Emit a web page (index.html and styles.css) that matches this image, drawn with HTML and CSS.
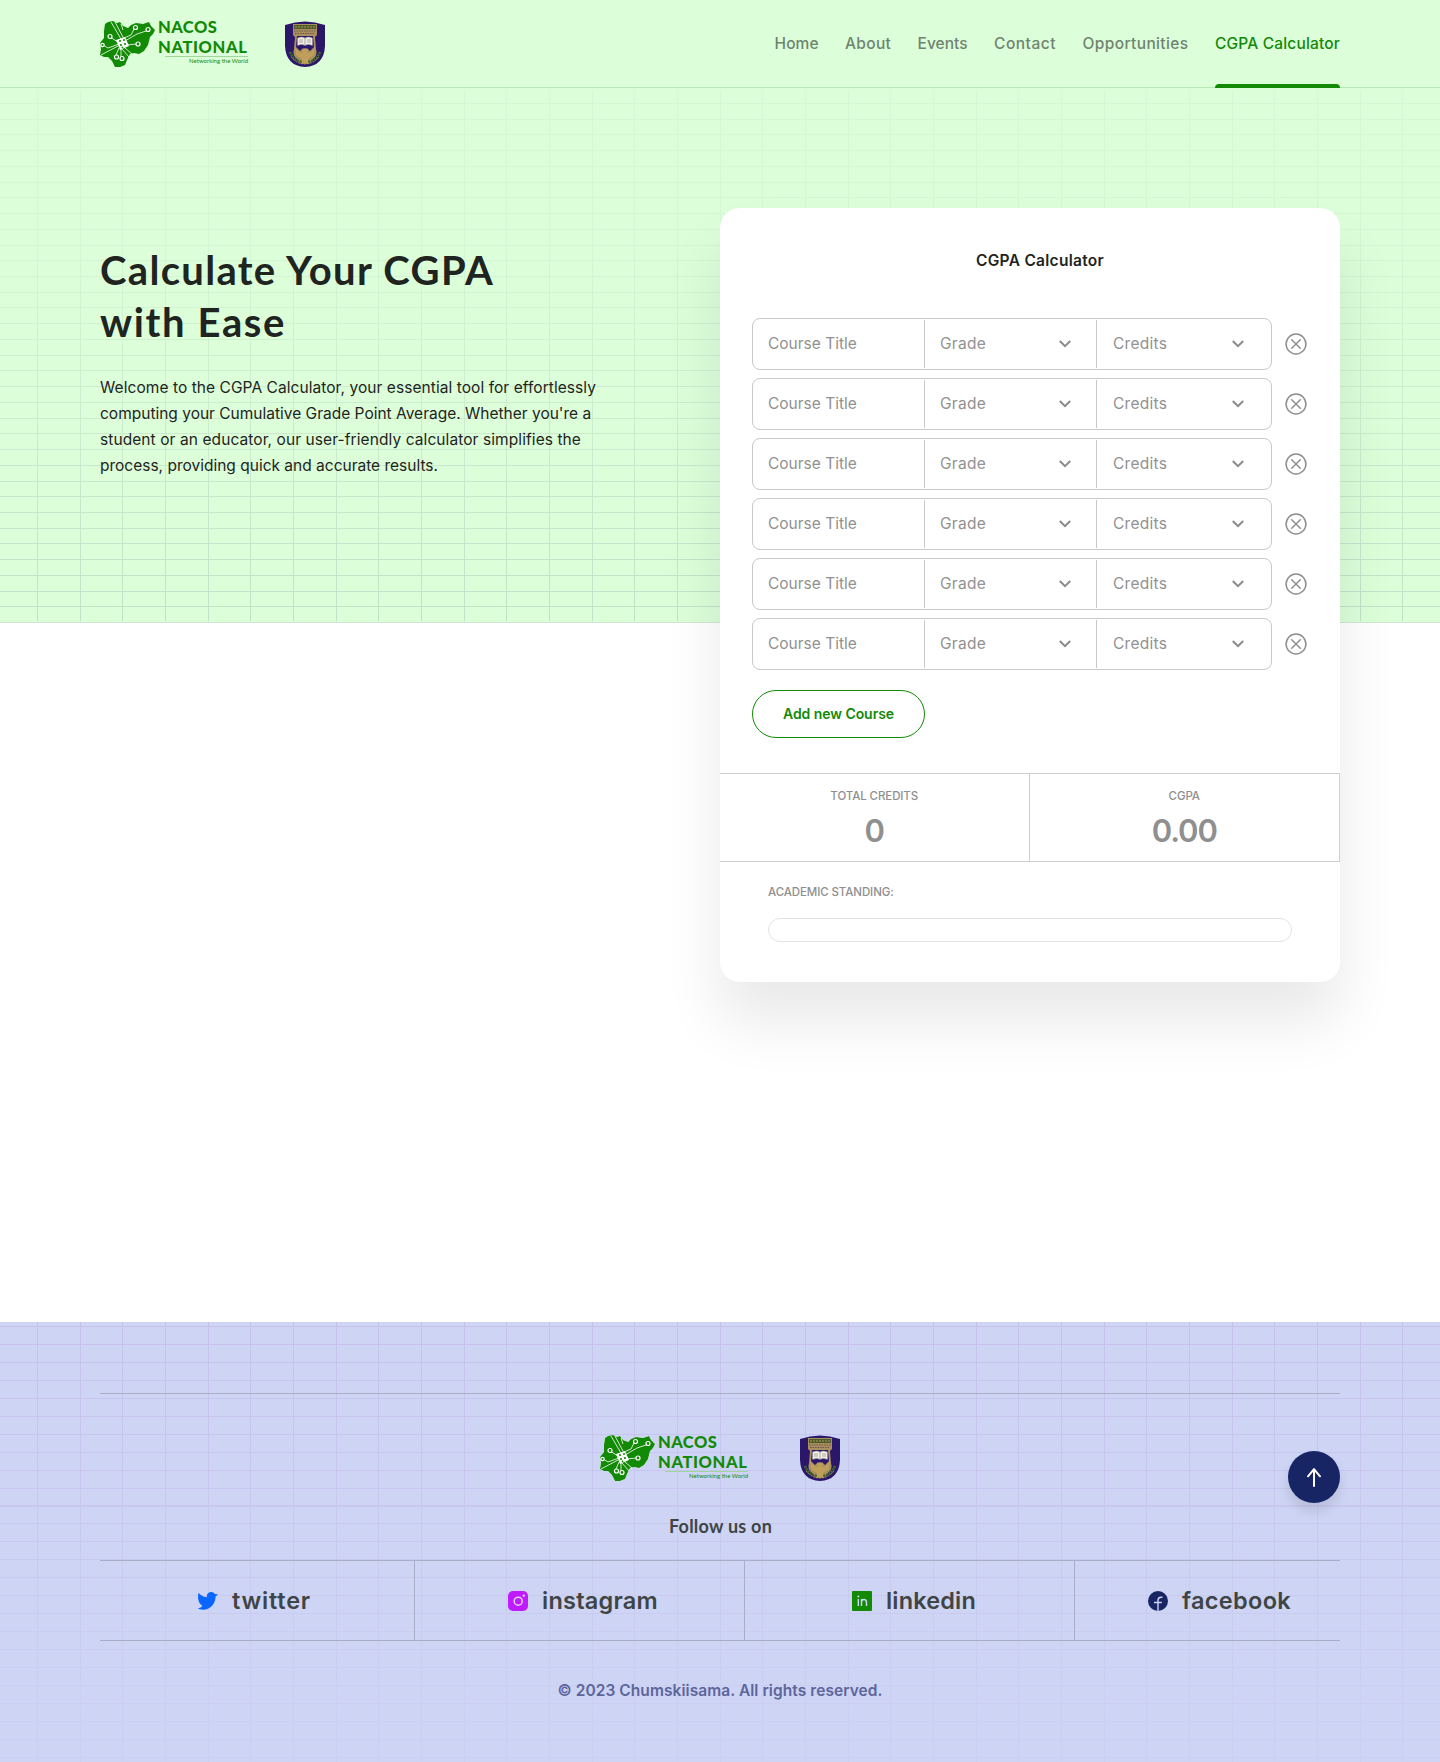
FILE: index.html
```html
<!DOCTYPE html>
<html lang="en">
<head>
<meta charset="utf-8">
<title>CGPA Calculator</title>
<link rel="stylesheet" href="styles.css">
</head>
<body>
<svg class="defs" aria-hidden="true">
  <symbol id="map" viewBox="0 0 55 47">
    <path fill="#128a06" d="M5 3 8 1 13 0 17 2 20 1 23 5 28 7 31 4 36 2 43 3 49 1 51 5 55 9 53 13 50 16 48 24 44 30 39 33 34 32 30 33 27 39 25 44 20 46 15 46 12 40 8 36 4 36 0 34 1 28 0 22 4 17 4 10Z"/>
    <g fill="none" stroke="#fff" stroke-width=".8">
      <path d="M11 1 21 18M15 1 24 18M21 3 23 9M24 17 31 14 34 8M25 20 37 13 46 10M18 21 10 16M19 23 8 27 3 24M18 25 1 34M26 24 37 23M25 27 32 33M22 28 29 36M21 28 21 36M19 27 16 34"/>
      <g fill="#128a06" stroke-width="1.200"><circle cx="35.500" cy="6.500" r="2"/><circle cx="48" cy="8.500" r="2"/><circle cx="10" cy="15.500" r="2"/><circle cx="38" cy="23" r="2"/><circle cx="16.500" cy="36" r="2"/><circle cx="22" cy="37.500" r="2"/><circle cx="2.500" cy="24" r="1.700"/></g>
    </g>
    <path fill="#fff" d="m16 19 9-3 4 9-9 4Z"/>
    <g fill="#128a06"><circle cx="20" cy="20" r="1.100"/><circle cx="24" cy="19" r="1"/><circle cx="21" cy="24" r="1.100"/><circle cx="25" cy="23" r="1.100"/><circle cx="22.500" cy="26.500" r=".9"/></g>
  </symbol>
  <symbol id="shield" viewBox="0 0 40 46">
    <path fill="#2b1769" d="M0 4Q20-3 40 4V25Q39 45 20 46 1 45 0 25Z"/>
    <path fill="#a88f5c" d="M8 3H32V14L30 16 31 28Q33 34 28 38L24 43H16L12 38Q7 34 9 28L10 16 8 14Z"/>
    <path fill="#4b5a2b" d="M9 4H31V8H9Z"/>
    <path stroke="#b79a57" stroke-width="1" stroke-dasharray="2 1" d="M10 6H30"/>
    <path stroke="#5b4653" stroke-width=".8" d="M9 10H31M10 12.500H30" stroke-dasharray="1.500 1"/>
    <path fill="#2b1769" d="M12 15 28 15 29 26 25 30 22 27 20 29 18 27 15 30 11 26Z"/>
    <path fill="#f3efe6" stroke="#8d8a9d" stroke-width=".5" d="M12.500 17Q17 15 20 17 23 15 27.500 17V24.500Q23 22.500 20 24.500 17 22.500 12.500 24.500Z"/>
    <path stroke="#777" stroke-width=".6" d="M20 17V24M14 19H18M14 21H18M22 19H26M22 21H26"/>
    <path fill="#c09f5b" d="M10 24Q12 32 18 32L17 29 20 27 23 29 22 32Q28 32 30 24L29 34 23 38 25 42H15L17 38 11 34Z"/>
    <path fill="none" stroke="#3f6b2b" stroke-width="2.500" stroke-dasharray="2 .8" d="M5 31Q8 39 17 41M35 31Q32 39 23 41"/>
    <path fill="none" stroke="#b79a57" stroke-width=".9" stroke-dasharray="2 1" d="M6 36Q12 43 20 43 28 43 34 36"/>
  </symbol>
  <symbol id="chev" viewBox="0 0 12 8"><path fill="none" stroke="#8a8a8a" stroke-width="2" d="m.8 1 5.200 5.200L11.200 1"/></symbol>
  <symbol id="close" viewBox="0 0 22 22"><g fill="none" stroke="#8f8f8f" stroke-width="1.500"><circle cx="11" cy="11" r="9.900"/><path stroke-linecap="round" d="m6.700 6.700 8.600 8.600M15.300 6.700l-8.600 8.600"/></g></symbol>
</svg>

<header class="header">
  <div class="brand">
    <svg class="map"><use href="#map"/></svg>
    <div class="wordmark"><b class="w1">NACOS</b><b class="w2">NATIONAL</b><small>Networking the World</small></div>
    <svg class="shield"><use href="#shield"/></svg>
  </div>
  <nav class="nav">
    <a class="n1">Home</a><a class="n2">About</a><a class="n3">Events</a><a class="n4">Contact</a><a class="n5">Opportunities</a><a class="n6 active">CGPA Calculator</a>
  </nav>
</header>

<main class="main">
  <section class="hero">
    <div class="intro">
      <h1><span class="h1a">Calculate Your CGPA</span><br><span class="h1b">with Ease</span></h1>
      <p><span class="p1">Welcome to the CGPA Calculator, your essential tool for effortlessly</span><br><span class="p2">computing your Cumulative Grade Point Average. Whether you're a</span><br><span class="p3">student or an educator, our user-friendly calculator simplifies the</span><br><span class="p4">process, providing quick and accurate results.</span></p>
    </div>
    <div class="card">
      <h2><span>CGPA Calculator</span></h2>
      <div class="rows">
        <div class="row"><div class="fields"><div class="f"><span class="ct">Course Title</span></div><div class="f"><span class="gr">Grade</span><svg class="chev"><use href="#chev"/></svg></div><div class="f"><span class="cr">Credits</span><svg class="chev"><use href="#chev"/></svg></div></div><svg class="close"><use href="#close"/></svg></div>
        <div class="row"><div class="fields"><div class="f"><span class="ct">Course Title</span></div><div class="f"><span class="gr">Grade</span><svg class="chev"><use href="#chev"/></svg></div><div class="f"><span class="cr">Credits</span><svg class="chev"><use href="#chev"/></svg></div></div><svg class="close"><use href="#close"/></svg></div>
        <div class="row"><div class="fields"><div class="f"><span class="ct">Course Title</span></div><div class="f"><span class="gr">Grade</span><svg class="chev"><use href="#chev"/></svg></div><div class="f"><span class="cr">Credits</span><svg class="chev"><use href="#chev"/></svg></div></div><svg class="close"><use href="#close"/></svg></div>
        <div class="row"><div class="fields"><div class="f"><span class="ct">Course Title</span></div><div class="f"><span class="gr">Grade</span><svg class="chev"><use href="#chev"/></svg></div><div class="f"><span class="cr">Credits</span><svg class="chev"><use href="#chev"/></svg></div></div><svg class="close"><use href="#close"/></svg></div>
        <div class="row"><div class="fields"><div class="f"><span class="ct">Course Title</span></div><div class="f"><span class="gr">Grade</span><svg class="chev"><use href="#chev"/></svg></div><div class="f"><span class="cr">Credits</span><svg class="chev"><use href="#chev"/></svg></div></div><svg class="close"><use href="#close"/></svg></div>
        <div class="row"><div class="fields"><div class="f"><span class="ct">Course Title</span></div><div class="f"><span class="gr">Grade</span><svg class="chev"><use href="#chev"/></svg></div><div class="f"><span class="cr">Credits</span><svg class="chev"><use href="#chev"/></svg></div></div><svg class="close"><use href="#close"/></svg></div>
      </div>
      <button class="add"><span>Add new Course</span></button>
      <div class="stats">
        <div class="stat"><span class="label tc">TOTAL CREDITS</span><span class="value v1">0</span></div>
        <div class="stat"><span class="label cg">CGPA</span><span class="value v2">0.00</span></div>
      </div>
      <div class="standing"><span class="label as">ACADEMIC STANDING:</span><div class="bar"></div></div>
    </div>
  </section>
</main>

<footer class="footer">
  <div class="foot-in">
    <div class="brand">
      <svg class="map outlined"><use href="#map"/></svg>
      <div class="wordmark"><b class="w1">NACOS</b><b class="w2">NATIONAL</b><small>Networking the World</small></div>
      <svg class="shield"><use href="#shield"/></svg>
    </div>
    <p class="follow"><span>Follow us on</span></p>
    <div class="social">
      <a><svg viewBox="1 0 20.500 20"><path fill="#0a66ff" d="M21.500 3.300 19 5.400C18.900 13 13.300 19 6.500 19 3.500 19 1.500 18.400 1 17.300 3 17 4.600 16.200 5.500 15 .8 11.800.5 6.500 1.500 1.500 3.500 4 6.500 6 10 6.100V5.200C10 2.700 12 .8 14.500.8 16 .8 17.400 1.600 18.300 2.800Z"/></svg><span class="s1">twitter</span></a>
      <a><svg viewBox="0 0 20 20"><rect width="20" height="20" rx="5" fill="#c01aff"/><circle cx="10.200" cy="10.200" r="4" fill="none" stroke="#dfd4f6" stroke-width="1.500"/><circle cx="15.800" cy="4.600" r="1.200" fill="#dfd4f6"/></svg><span class="s2">instagram</span></a>
      <a><svg viewBox="0 0 20 20"><rect width="20" height="20" rx="1" fill="#128a06"/><path fill="none" stroke="#cdd4f4" stroke-width="1.400" d="M6.300 8V15M9.500 15V8M9.500 11.500Q9.700 8.500 12 8.500 14.500 8.500 14.500 11.500V15"/><circle cx="6.300" cy="5.500" r="1" fill="#cdd4f4"/></svg><span class="s3">linkedin</span></a>
      <a><svg viewBox="0 0 20 20"><circle cx="10" cy="10" r="10" fill="#182565"/><path fill="none" stroke="#cdd4f4" stroke-width="1.400" d="M10 20V9.500Q10 6.300 13 6.300H14.500M6 11.500H13.800"/></svg><span class="s4">facebook</span></a>
    </div>
    <p class="copy"><span>© 2023 Chumskiisama. All rights reserved.</span></p>
  </div>
  <a class="top"><svg viewBox="0 0 14 19"><path fill="none" stroke="#fff" stroke-width="2" stroke-linecap="round" stroke-linejoin="round" d="M7 18V1.200M1 8.300 7 1.200l6 7.100"/></svg></a>
</footer>
</body>
</html>
```
FILE: styles.css
```css
* { box-sizing: border-box; }
body { margin: 0; background: #fff; color: #1f2421; font-family: Inter, sans-serif; font-size: 15.5px; }
h1, h2, p { margin: 0; }
.defs { position: absolute; width: 0; height: 0; }

/* Header */
.header { height: 88px; padding: 0 100px; display: flex; justify-content: space-between; background: #dcfed9; border-bottom: 1px solid #b8e8b5; }
.brand { display: flex; align-items: flex-start; padding-top: 20px; }
.map { width: 55px; height: 47px; margin-top: 1px; }
.outlined { overflow: visible; filter: drop-shadow(0 0 .6px #fff) drop-shadow(0 0 .6px #fff); margin-top: 0; }
.wordmark { display: flex; flex-direction: column; width: 90px; height: 46px; margin-left: 3px; color: #128a06; font-family: Lato, sans-serif; white-space: nowrap; }
.wordmark b { font-weight: 900; font-size: 16.5px; line-height: 18.5px; margin-top: -2px; }
.wordmark .w1 { letter-spacing: .45px; }
.wordmark .w2 { letter-spacing: .62px; margin-top: 1px; }
.wordmark small { width: 83px; align-self: flex-end; text-align: right; font-size: 6px; line-height: 8px; border-top: 1px solid #9fd79b; }
.shield { width: 40px; height: 46px; margin: 1px 0 0 37px; }
.nav { display: flex; gap: 26.5px; line-height: 87px; font-weight: 500; color: #6f8470; }
.nav a { white-space: nowrap; height: 88px; }
.n1 { letter-spacing: .055px; }
.n2 { letter-spacing: .29px; }
.n3 { letter-spacing: .018px; }
.n4 { letter-spacing: .5px; }
.n5 { letter-spacing: .374px; }
.n6 { letter-spacing: .175px; }
.nav .active { position: relative; color: #128a06; }
.active::after { content: ""; position: absolute; left: 0; right: 0; bottom: 0; height: 4px; border-radius: 4px 4px 0 0; background: #128a06; }

/* Hero */
.main { height: 1234px; }
.hero { position: relative; height: 535px; padding: 120px 100px 0; display: flex; justify-content: space-between; align-items: flex-start; background: #dcfed9; border-bottom: 1px solid #cfe6d2; }
.hero::before, .footer::before { content: ""; position: absolute; inset: 2px 0 1px; }
.hero::before {
  background: repeating-linear-gradient(to right, transparent 0 37px, #a9ccb8 37px 38px, transparent 38px 42.667px), repeating-linear-gradient(transparent 0 13px, #a9ccb8 13px 14px, transparent 14px 15.73px);
  -webkit-mask: linear-gradient(rgba(0,0,0,.13), rgba(0,0,0,.16) 30%, rgba(0,0,0,.55));
}
.intro { position: relative; padding-top: 36px; white-space: nowrap; }
h1 { font: 700 40px/52px Lato, sans-serif; }
.h1a { letter-spacing: 1.33px; }
.h1b { letter-spacing: 1.6px; }
.intro p { margin-top: 27px; line-height: 26px; }
.p1 { letter-spacing: .063px; }
.p3 { letter-spacing: .085px; }

/* Calculator card */
.card { position: relative; width: 620px; height: 774px; background: #fff; border-radius: 20px; box-shadow: 0 40px 60px rgba(0,0,0,.09); }
h2 { font-size: 15.5px; font-weight: 600; line-height: 24px; letter-spacing: .28px; padding: 41px 0 0 20px; text-align: center; }
.rows { margin: 45px 0 0 32px; display: grid; gap: 8px; }
.row { display: flex; align-items: center; gap: 13px; }
.fields { width: 520px; height: 52px; padding: 1px 0; border: 1px solid #c9c9c9; border-radius: 8px; display: grid; grid-template-columns: 172px 172px 1fr; color: #919191; }
.f { display: flex; align-items: center; justify-content: space-between; padding: 0 25px 0 15px; border-right: 1px solid #c9c9c9; }
.f:last-child { border: 0; padding-left: 16px; padding-right: 27px; }
.f span { margin-top: -1px; }
.gr, .cr { letter-spacing: .26px; }
.chev { width: 12px; height: 8px; }
.close { width: 22px; height: 22px; }
.add { display: block; margin: 20px 0 0 32px; width: 173px; height: 48px; border: 1px solid #128a06; border-radius: 24px; background: #fff; color: #128a06; font: 600 14px Inter, sans-serif; letter-spacing: -.06px; white-space: nowrap; padding: 0 0 1px; }
.stats { margin-top: 35px; height: 89px; display: grid; grid-template-columns: 1fr 1fr; border: 1px solid #cfcfcf; border-left: 0; color: #8f8f8f; text-align: center; }
.stat { display: flex; flex-direction: column; padding-top: 14px; }
.stat:first-child { border-right: 1px solid #cfcfcf; }
.label { font-size: 11.5px; font-weight: 500; line-height: 16px; letter-spacing: -.1px; color: #8f8f8f; }
.value { font-size: 31px; font-weight: 600; line-height: 40px; letter-spacing: -1.1px; margin-top: 7px; }
.standing { padding: 22px 48px 0; }
.standing .label { display: block; }
.bar { margin-top: 18px; height: 24px; border: 1px solid #e3e3e3; border-radius: 12px; }

/* Footer */
.footer { position: relative; height: 440px; padding: 71px 100px 0; background: #cdd4f4; }
.footer::before {
  inset: 0;
  background: repeating-linear-gradient(to right, transparent 0 37px, #c3bbea 37px 38px, transparent 38px 42.667px), repeating-linear-gradient(transparent 0 4px, #c3bbea 4px 5px, transparent 5px 17.95px);
  -webkit-mask: linear-gradient(rgba(0,0,0,.75), rgba(0,0,0,.12));
}
.foot-in { position: relative; border-top: 1px solid #a9adc8; }
.foot-in .brand { padding: 41px 0 0 500px; height: 88px; }
.footer .shield { margin: 0 0 0 52px; }
.follow { margin-top: 31px; text-align: center; font: 700 18px/26px Lato, sans-serif; letter-spacing: .24px; color: #3f4545; }
.follow span { margin-left: 1px; }
.social { margin-top: 21px; height: 81px; display: grid; grid-template-columns: 315px 330px 330px 265px; border: solid #a9adc8; border-width: 1px 0; }
.social a { display: flex; align-items: center; gap: 14px; padding-left: 93px; border-right: 1px solid #a9adc8; font-size: 23.5px; font-weight: 600; color: #3f4545; }
.social a:nth-child(1) { padding-left: 98px; }
.social a:nth-child(3) { padding-left: 107px; }
.social a:nth-child(4) { padding-left: 73px; border: 0; }
.social svg { width: 20px; height: 20px; }
.s1 { letter-spacing: .79px; }
.s2 { letter-spacing: .24px; }
.s3 { letter-spacing: .17px; }
.s4 { letter-spacing: .32px; }
.copy { margin-top: 37px; text-align: center; line-height: 26px; font-weight: 600; letter-spacing: .07px; color: #5d659b; }
.top { position: absolute; right: 100px; top: 129px; width: 52px; height: 52px; border-radius: 50%; background: #182565; display: grid; place-items: center; box-shadow: 0 8px 12px rgba(0,0,0,.1); }
.top svg { width: 14px; height: 19px; }
```
